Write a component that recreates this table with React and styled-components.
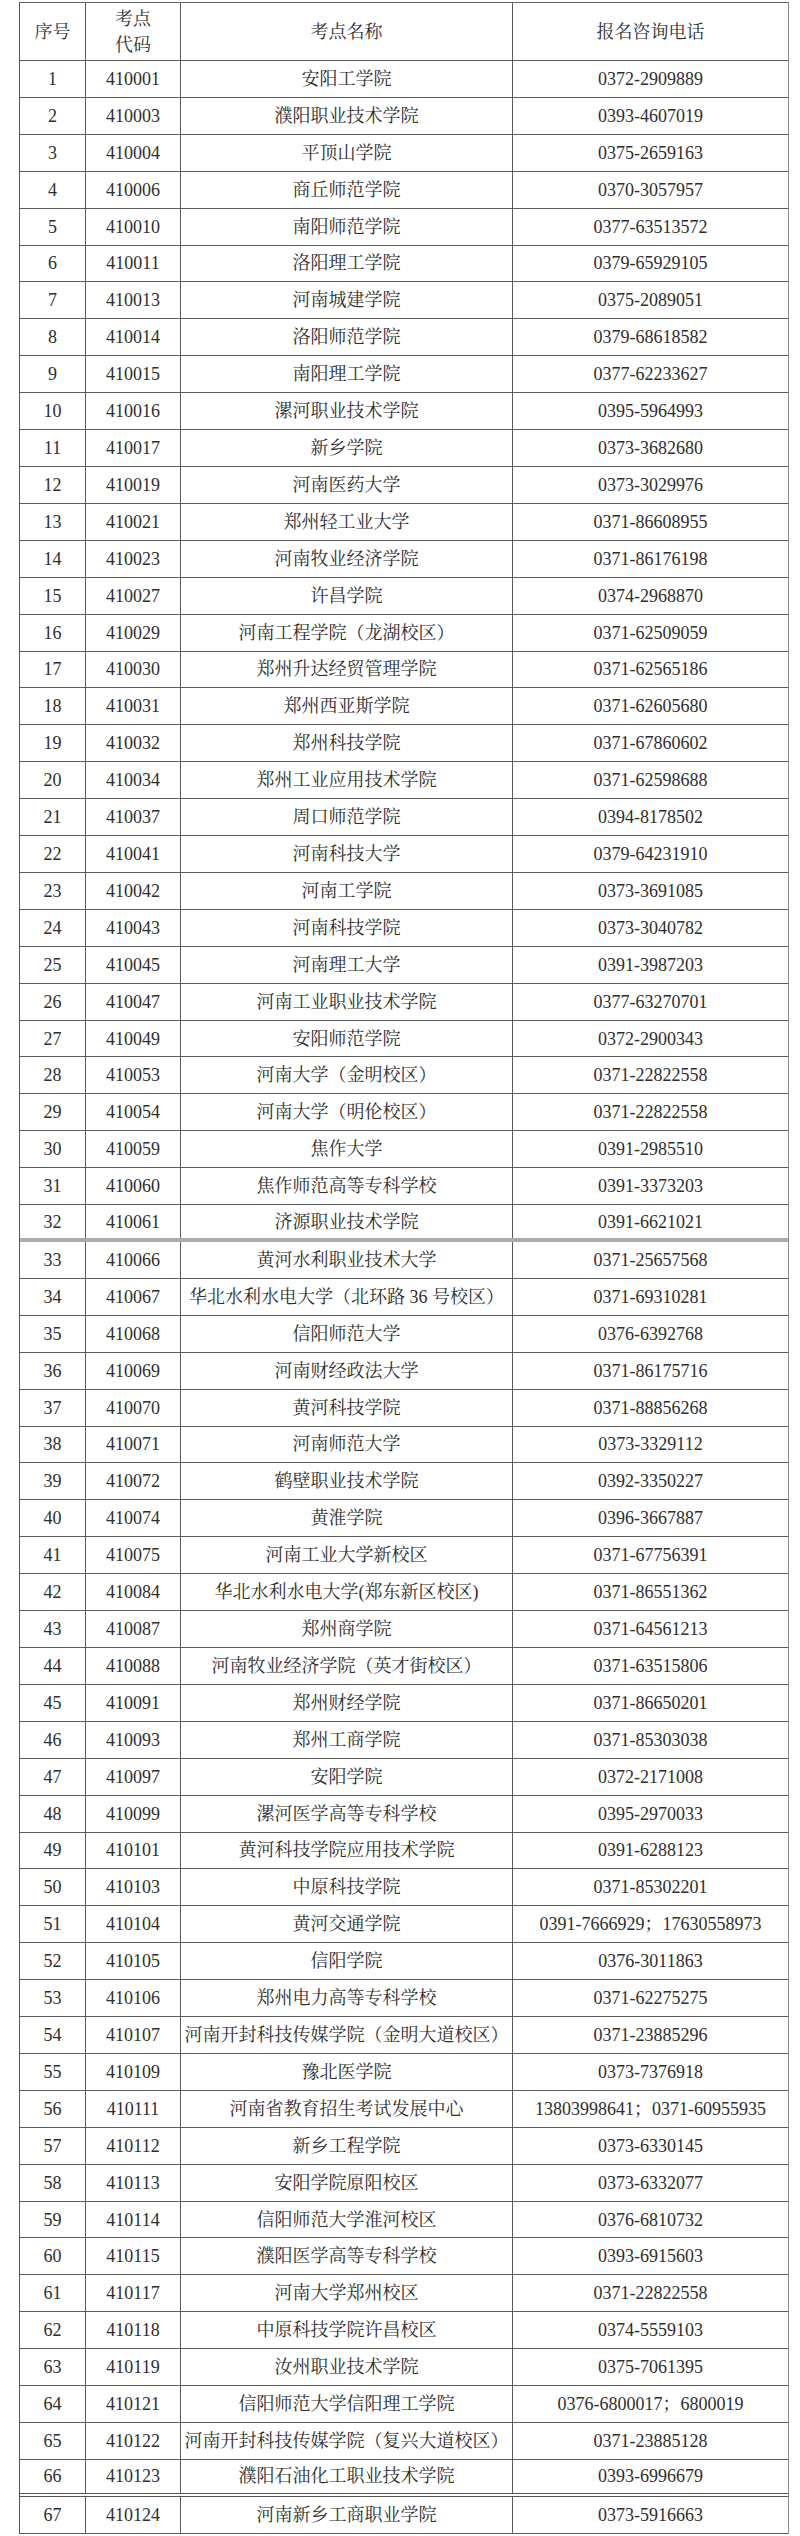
import styled, { createGlobalStyle } from 'styled-components';

const GlobalStyle = createGlobalStyle`
  body {
    margin: 0;
    background: #ffffff;
  }
`;

// 序号, 代码, 名称, 电话
const ROWS = [
  ['1', '410001', '安阳工学院', '0372-2909889'],
  ['2', '410003', '濮阳职业技术学院', '0393-4607019'],
  ['3', '410004', '平顶山学院', '0375-2659163'],
  ['4', '410006', '商丘师范学院', '0370-3057957'],
  ['5', '410010', '南阳师范学院', '0377-63513572'],
  ['6', '410011', '洛阳理工学院', '0379-65929105'],
  ['7', '410013', '河南城建学院', '0375-2089051'],
  ['8', '410014', '洛阳师范学院', '0379-68618582'],
  ['9', '410015', '南阳理工学院', '0377-62233627'],
  ['10', '410016', '漯河职业技术学院', '0395-5964993'],
  ['11', '410017', '新乡学院', '0373-3682680'],
  ['12', '410019', '河南医药大学', '0373-3029976'],
  ['13', '410021', '郑州轻工业大学', '0371-86608955'],
  ['14', '410023', '河南牧业经济学院', '0371-86176198'],
  ['15', '410027', '许昌学院', '0374-2968870'],
  ['16', '410029', '河南工程学院（龙湖校区）', '0371-62509059'],
  ['17', '410030', '郑州升达经贸管理学院', '0371-62565186'],
  ['18', '410031', '郑州西亚斯学院', '0371-62605680'],
  ['19', '410032', '郑州科技学院', '0371-67860602'],
  ['20', '410034', '郑州工业应用技术学院', '0371-62598688'],
  ['21', '410037', '周口师范学院', '0394-8178502'],
  ['22', '410041', '河南科技大学', '0379-64231910'],
  ['23', '410042', '河南工学院', '0373-3691085'],
  ['24', '410043', '河南科技学院', '0373-3040782'],
  ['25', '410045', '河南理工大学', '0391-3987203'],
  ['26', '410047', '河南工业职业技术学院', '0377-63270701'],
  ['27', '410049', '安阳师范学院', '0372-2900343'],
  ['28', '410053', '河南大学（金明校区）', '0371-22822558'],
  ['29', '410054', '河南大学（明伦校区）', '0371-22822558'],
  ['30', '410059', '焦作大学', '0391-2985510'],
  ['31', '410060', '焦作师范高等专科学校', '0391-3373203'],
  ['32', '410061', '济源职业技术学院', '0391-6621021'],
  ['33', '410066', '黄河水利职业技术大学', '0371-25657568'],
  ['34', '410067', '华北水利水电大学（北环路 36 号校区）', '0371-69310281'],
  ['35', '410068', '信阳师范大学', '0376-6392768'],
  ['36', '410069', '河南财经政法大学', '0371-86175716'],
  ['37', '410070', '黄河科技学院', '0371-88856268'],
  ['38', '410071', '河南师范大学', '0373-3329112'],
  ['39', '410072', '鹤壁职业技术学院', '0392-3350227'],
  ['40', '410074', '黄淮学院', '0396-3667887'],
  ['41', '410075', '河南工业大学新校区', '0371-67756391'],
  ['42', '410084', '华北水利水电大学(郑东新区校区)', '0371-86551362'],
  ['43', '410087', '郑州商学院', '0371-64561213'],
  ['44', '410088', '河南牧业经济学院（英才街校区）', '0371-63515806'],
  ['45', '410091', '郑州财经学院', '0371-86650201'],
  ['46', '410093', '郑州工商学院', '0371-85303038'],
  ['47', '410097', '安阳学院', '0372-2171008'],
  ['48', '410099', '漯河医学高等专科学校', '0395-2970033'],
  ['49', '410101', '黄河科技学院应用技术学院', '0391-6288123'],
  ['50', '410103', '中原科技学院', '0371-85302201'],
  ['51', '410104', '黄河交通学院', '0391-7666929；17630558973'],
  ['52', '410105', '信阳学院', '0376-3011863'],
  ['53', '410106', '郑州电力高等专科学校', '0371-62275275'],
  ['54', '410107', '河南开封科技传媒学院（金明大道校区）', '0371-23885296'],
  ['55', '410109', '豫北医学院', '0373-7376918'],
  ['56', '410111', '河南省教育招生考试发展中心', '13803998641；0371-60955935'],
  ['57', '410112', '新乡工程学院', '0373-6330145'],
  ['58', '410113', '安阳学院原阳校区', '0373-6332077'],
  ['59', '410114', '信阳师范大学淮河校区', '0376-6810732'],
  ['60', '410115', '濮阳医学高等专科学校', '0393-6915603'],
  ['61', '410117', '河南大学郑州校区', '0371-22822558'],
  ['62', '410118', '中原科技学院许昌校区', '0374-5559103'],
  ['63', '410119', '汝州职业技术学院', '0375-7061395'],
  ['64', '410121', '信阳师范大学信阳理工学院', '0376-6800017；6800019'],
  ['65', '410122', '河南开封科技传媒学院（复兴大道校区）', '0371-23885128'],
  ['66', '410123', '濮阳石油化工职业技术学院', '0393-6996679'],
  ['67', '410124', '河南新乡工商职业学院', '0373-5916663'],
];

const Page = styled.div`
  padding: 2px 0 0 19px;
`;

const Table = styled.div`
  width: 770px;
  box-sizing: border-box;
  border-top: 1px solid #666;
  border-left: 1px solid #555;
  border-right: 1px solid #8a8a8a;
  font-family: "Liberation Serif", "Noto Serif CJK SC", "Noto Sans CJK SC", serif;
  font-size: 18px;
  color: #2e2e2e;
`;

// page-break lines in the original scan: a grey band after 32, a double rule after 66
const SEPARATORS = {
  band: '4px solid #ababab',
  double: '4px double #555',
  normal: '1px solid #5c5c5c',
};

const Row = styled.div`
  display: grid;
  grid-template-columns: 66px 95px 332px 1fr;
  height: ${(p) => p.$height};
  box-sizing: border-box;
  border-bottom: ${(p) => SEPARATORS[p.$sep || 'normal']};
`;

const Cell = styled.div`
  display: flex;
  align-items: center;
  justify-content: center;
  text-align: center;
  white-space: nowrap;
  line-height: ${(p) => (p.$stack ? '26px' : '20px')};
  border-right: 1px solid #5c5c5c;
  &:last-child {
    border-right: 0;
  }
`;

const App = () => {
  return <>
    <GlobalStyle />
    <Page>
      <Table>
        <Row $height="58px">
          <Cell>序号</Cell>
          <Cell $stack>考点<br />代码</Cell>
          <Cell>考点名称</Cell>
          <Cell>报名咨询电话</Cell>
        </Row>
        {ROWS.map((r) => (
          <Row
            key={r[0]}
            $height="36.92px"
            $sep={r[0] === '32' ? 'band' : r[0] === '66' ? 'double' : undefined}
          >
            <Cell>{r[0]}</Cell>
            <Cell>{r[1]}</Cell>
            <Cell>{r[2]}</Cell>
            <Cell>{r[3]}</Cell>
          </Row>
        ))}
      </Table>
    </Page>
  </>
};

export default App;
